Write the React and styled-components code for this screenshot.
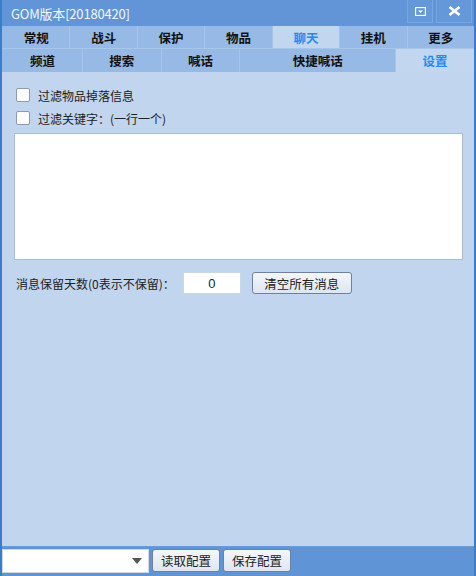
import React from "react";
import styled, { createGlobalStyle } from "styled-components";

const Global = createGlobalStyle`
  html, body { margin: 0; padding: 0; background: #4a8a3a; }
  body { font-family: "Noto Sans CJK SC", "Noto Sans", sans-serif; }
  * { box-sizing: border-box; }
`;

const Window = styled.div`
  width: 476px;
  height: 576px;
  display: flex;
  flex-direction: column;
  background: #5f94d6;
  border-left: 2px solid #3b7ccb;
  border-right: 2px solid #3b7ccb;
  overflow: hidden;
`;

const TitleBar = styled.div`
  height: 26px;
  display: flex;
  align-items: center;
  background: #6295d7;
  padding-left: 9px;
`;

const Title = styled.div`
  flex: 1;
  color: #f2f6fc;
  font-size: 13px;
  font-family: "Noto Sans CJK SC", sans-serif;
  letter-spacing: -0.2px;
`;

const WinButtons = styled.div`
  display: flex;
  align-self: flex-start;
  gap: 3px;
  margin-right: 2px;
`;

const WinButton = styled.div`
  width: ${(p) => p.w}px;
  height: 23px;
  display: flex;
  align-items: center;
  justify-content: center;
  border: 1px solid #7aa6df;
  border-top: none;
  background: #6598d8;
`;

const TabRow = styled.div`
  height: 23px;
  display: flex;
  background: #97b9e5;
  border-bottom: ${(p) => (p.bottom ? "0" : "1px solid #a8c5ea")};
`;

const Tab = styled.div`
  flex: ${(p) => p.grow || 1} 1 0;
  display: flex;
  align-items: center;
  justify-content: center;
  font-size: 12.5px;
  font-weight: 700;
  color: ${(p) => (p.active ? "#1e8cf0" : "#111")};
  background: ${(p) => (p.active ? "#c2d6ef" : "#97b9e5")};
  border-left: 1px solid ${(p) => (p.first ? "transparent" : "#a6c3ea")};
`;

const Content = styled.div`
  flex: 1;
  background: #c1d5ee;
  padding: 16px 11px 0 12px;
  display: flex;
  flex-direction: column;
`;

const CheckRow = styled.label`
  display: flex;
  align-items: center;
  height: 14px;
  margin-left: 2px;
  margin-bottom: ${(p) => p.mb}px;
  font-size: 12px;
  color: #222;
`;

const Box = styled.span`
  width: 14px;
  height: 14px;
  background: #fff;
  border: 1px solid #8a9bb0;
  border-radius: 2px;
  margin-right: 8px;
`;

const TextArea = styled.div`
  height: 127px;
  background: #fff;
  border: 1px solid #a8bcd4;
`;

const OptionRow = styled.div`
  display: flex;
  align-items: center;
  margin-top: 12px;
  margin-left: 2px;
  font-size: 12px;
  color: #222;
`;

const NumInput = styled.div`
  width: 58px;
  height: 22px;
  margin-left: 8px;
  background: #fff;
  border: 1px solid #c9d6e6;
  display: flex;
  align-items: center;
  justify-content: center;
  font-family: "Liberation Sans", sans-serif;
  font-size: 13px;
  color: #222;
`;

const Button = styled.div`
  height: ${(p) => p.h || 22}px;
  width: ${(p) => p.w}px;
  margin-left: ${(p) => p.ml || 0}px;
  display: flex;
  align-items: center;
  justify-content: center;
  border: 1px solid #6e82a0;
  border-radius: 3px;
  background: linear-gradient(#f4f6fa, #dfe6f0);
  font-size: 12.5px;
  color: #222;
`;

const BottomBar = styled.div`
  height: 30px;
  display: flex;
  align-items: center;
  background: #5f94d6;
  padding-bottom: 2px;
  border-top: 1px solid #6a9bd9;
`;

const Combo = styled.div`
  width: 147px;
  height: 24px;
  background: #fff;
  border: 1px solid #cfd8e4;
  display: flex;
  align-items: center;
  justify-content: flex-end;
  padding-right: 6px;
`;

export default function App() {
  const top = ["常规", "战斗", "保护", "物品", "聊天", "挂机", "更多"];
  const sub = [
    { t: "频道", g: 80 },
    { t: "搜索", g: 79 },
    { t: "喊话", g: 79 },
    { t: "快捷喊话", g: 157 },
    { t: "设置", g: 79, active: true },
  ];
  return (
    <>
      <Global />
      <Window>
        <TitleBar>
          <Title>GOM版本[20180420]</Title>
          <WinButtons>
            <WinButton w={26}>
              <svg width="11" height="9" viewBox="0 0 11 9">
                <rect x="0.5" y="0.5" width="10" height="8" fill="none" stroke="#fff" strokeWidth="1.3" />
                <path d="M3 3.5 H8 L5.5 6 Z" fill="#fff" />
              </svg>
            </WinButton>
            <WinButton w={36}>
              <svg width="13" height="10" viewBox="0 0 13 10">
                <path d="M1.5 1 L11.5 9 M11.5 1 L1.5 9" stroke="#fff" strokeWidth="2.6" />
              </svg>
            </WinButton>
          </WinButtons>
        </TitleBar>
        <TabRow>
          {top.map((t, i) => (
            <Tab key={t} first={i === 0} active={t === "聊天"}>
              {t}
            </Tab>
          ))}
        </TabRow>
        <TabRow bottom>
          {sub.map((s, i) => (
            <Tab key={s.t} first={i === 0} grow={s.g} active={s.active}>
              {s.t}
            </Tab>
          ))}
        </TabRow>
        <Content>
          <CheckRow mb={9}>
            <Box />
            过滤物品掉落信息
          </CheckRow>
          <CheckRow mb={8}>
            <Box />
            过滤关键字：(一行一个)
          </CheckRow>
          <TextArea />
          <OptionRow>
            消息保留天数(0表示不保留)：
            <NumInput>0</NumInput>
            <Button w={100} ml={11}>
              清空所有消息
            </Button>
          </OptionRow>
        </Content>
        <BottomBar>
          <Combo>
            <svg width="10" height="6" viewBox="0 0 10 6">
              <path d="M0 0 H10 L5 6 Z" fill="#555" />
            </svg>
          </Combo>
          <Button w={68} h={23} ml={3}>
            读取配置
          </Button>
          <Button w={68} h={23} ml={3}>
            保存配置
          </Button>
        </BottomBar>
      </Window>
    </>
  );
}
